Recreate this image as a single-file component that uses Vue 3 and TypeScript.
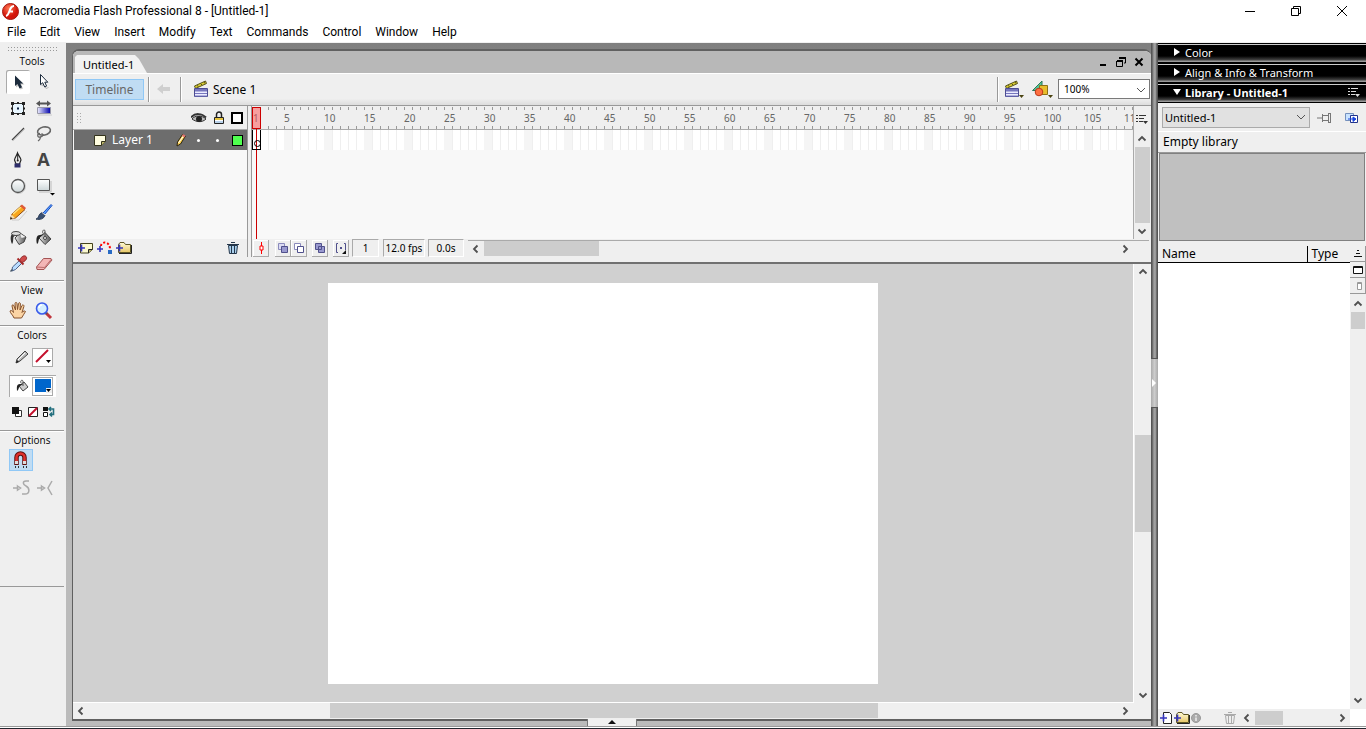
<script setup lang="ts">
import { ref } from 'vue'

interface Tool {
  id: string
  label: string
}

const menus: string[] = ['File', 'Edit', 'View', 'Insert', 'Modify', 'Text', 'Commands', 'Control', 'Window', 'Help']

const tools: Tool[] = [
  { id: 'arrow', label: 'Selection' },
  { id: 'subselect', label: 'Subselection' },
  { id: 'transform', label: 'Free transform' },
  { id: 'gradient', label: 'Gradient transform' },
  { id: 'line', label: 'Line' },
  { id: 'lasso', label: 'Lasso' },
  { id: 'pen', label: 'Pen' },
  { id: 'text', label: 'Text' },
  { id: 'oval', label: 'Oval' },
  { id: 'rect', label: 'Rectangle' },
  { id: 'pencil', label: 'Pencil' },
  { id: 'brush', label: 'Brush' },
  { id: 'ink', label: 'Ink bottle' },
  { id: 'bucket', label: 'Paint bucket' },
  { id: 'dropper', label: 'Eyedropper' },
  { id: 'eraser', label: 'Eraser' },
]
const viewTools: Tool[] = [
  { id: 'hand', label: 'Hand' },
  { id: 'zoom', label: 'Zoom' },
]
const activeTool = ref('arrow')

const frameLabels: number[] = [1, ...Array.from({ length: 22 }, (_, i) => (i + 1) * 5)]

const icons: Record<string, string> = {
  arrow: '<path d="M10 7v10.500l2.500-2 2 4 2.500-1-2-4h3.500z" fill="#999" opacity=".6"/><path d="M9 5.500v10.500l2.500-2 2 4.500 2.500-1.200-1.800-3.800h3z" fill="#1c2b3c"/>',
  subselect: '<path d="M10 7v9l2-1.500 2 4 2.500-1" fill="none" stroke="#bbb"/><path d="M8.500 4.500v10.200l2.200-2 2 4.300 1.900-.9-1.800-3.900h3z" fill="#fff" stroke="#1c2b3c"/>',
  transform: '<path d="M6.500 7.500h11v10h-11z" fill="#e8f6ff" stroke="#333"/><path d="M5 6h3v3H5zM11 6h2v2h-2zM16 6h3v3h-3zM5 11.500h2v2H5zM17 11.500h2v2h-2zM5 16h3v3H5zM11 17h2v2h-2zM16 16h3v3h-3z" fill="#222"/><path d="M11 11.500h2v2h-2z" fill="#124"/>',
  gradient: '<path d="M4 7.500 8 4.500v2h7v-2l4 3-4 3v-2H8v2z" fill="#555"/><path d="M5.500 11.500h13v6h-13z" fill="url(#g-blue)" stroke="#99a"/><path d="M6 19h14" stroke="#ccc"/>',
  line: '<path d="m7 19 12-12" stroke="#ccc"/><path d="M6 18 18 6" stroke="#444" stroke-width="1.300"/>',
  lasso: '<ellipse cx="12" cy="9" rx="6.500" ry="4" transform="rotate(-12 12 9)" fill="none" stroke="#666" stroke-width="1.600"/><path d="M8 11.500c-3 0-3 4 0 3.500s4-2.500 1.500-3.500M8 15c1 1-.5 3-2 4" fill="none" stroke="#666" stroke-width="1.300"/>',
  pen: '<path d="M11.500 5c-1 3-3 5-3 7l1.500 4h3.500l1.500-4c0-2-2.500-4-3.500-7z" fill="#eee" stroke="#222" stroke-width="1.200"/><path d="M11.700 6v7" stroke="#222"/><circle cx="11.700" cy="12.500" r="1" fill="#222"/><path d="M8.500 15.500h6v4h-6z" fill="#2d2d6a"/>',
  text: '<text x="11.500" y="18" text-anchor="middle" font-family="Open Sans, sans-serif" font-weight="700" font-size="18" fill="#444">A</text>',
  oval: '<circle cx="12.500" cy="12.500" r="7" fill="none" stroke="#ccc"/><circle cx="12" cy="12" r="6.500" fill="url(#g-face)" stroke="#555" stroke-width="1.300"/>',
  rect: '<path d="M5.500 5.500h12v11h-12z" fill="url(#g-face)" stroke="#555"/><path d="M7 18h12V7" fill="none" stroke="#bbb"/><path d="M18 19h5l-2.500 2.500z" fill="#000"/>',
  pencil: '<path d="M6 20h7l8-9" fill="none" stroke="#ccc"/><path d="m4.500 19 1.500-5 9-8 4 3.500-9.500 8.500z" fill="#f9a61c" stroke="#8f4a12"/><path d="m7 14 8-7" stroke="#ffe07a" stroke-width="1.500"/><path d="m14 6 2-1.500 4 3.500-1.500 2z" fill="#df5b39"/><path d="m4 19.500 1.500-5 3.500 3.500z" fill="#f6dba9"/><path d="m4 19.500.7-2.500 2 1.600z" fill="#222"/>',
  brush: '<path d="m11 13 8-8.500 1 1-7.500 9z" fill="#5ba2ff" stroke="#174bbf"/><path d="M4 19c3 0 2-5 6-6.500l3 2.500c-1 4-5 5-9 4z" fill="#394f72" stroke="#26364f"/><path d="m9.500 12 3.500 3" stroke="#ddd"/>',
  ink: '<path d="M6 8c-2 2-1.500 7 0 10 1.500-1 1-5 1.500-7L12 7z" fill="#333"/><path d="m9 12 5-5 6 4-2 5-5 2.500z" fill="url(#g-metal)" stroke="#444"/><path d="m14 7.500 5.500 3.500-4 1z" fill="#eee"/><ellipse cx="10" cy="7.500" rx="4.500" ry="2" fill="#ddd" stroke="#444"/>',
  bucket: '<path d="m7 12 6-5.500 6 6.500-6 5.500z" fill="url(#g-metal)" stroke="#444"/><path d="M13 12V4.500c-2-1.500-3 1-2 3" fill="none" stroke="#555"/><circle cx="13" cy="12" r="1.500" fill="#eee" stroke="#444"/><path d="M8 9c-4 0-4 5-3 9 2-1 1-4 3-7l4-3z" fill="#222"/>',
  dropper: '<path d="m6 18 .5-3 7-6.500 2.500 2.500-6.500 6.500-3.500 1.500z" fill="#b8dcff" stroke="#4d6288"/><path d="m4.500 19.500 2-2" stroke="#456" stroke-width="1.500"/><path d="m11.500 6.500 6 6" stroke="#a82727" stroke-width="2"/><path d="M14 8.500c0-3 4-6 6-4s-1 5-4 6z" fill="#ce4a4a" stroke="#8f2e2e"/>',
  eraser: '<path d="m4.500 15 7-8.500h7.500l1 1.500-8 9.500H5z" fill="#f3b6b6" stroke="#a45555"/><path d="m4.500 15 8 .500 7-8.500M12.500 15.500V17" fill="none" stroke="#bd6e6e"/>',
  hand: '<path d="M8 19c-1-3-4-5-4-7 1-1.500 3 .5 3.500 1.500L6 7c0-1.700 1.700-1.500 2 0l1.500 4-.5-6.500c.2-1.600 1.900-1.300 2 0l.5 6 1-6c.4-1.400 2-.9 1.900.5L14 11l2-4.500c.8-1.300 2.300-.4 1.900 1L16 13.500c1-1.500 3-2 3.500-1-1 2.500-3 4-4 6.500z" fill="#fbd4a4" stroke="#85502a"/>',
  zoom: '<path d="m14 14 5 5" stroke="#c0353d" stroke-width="3"/><path d="m13 13 2 2" stroke="#555" stroke-width="2"/><circle cx="10" cy="9.500" r="5.500" fill="#d5efff" stroke="#3a5bea" stroke-width="1.600"/><path d="M7 9c0-2 1.500-3 3-3" fill="none" stroke="#fff" stroke-width="1.500"/>',
}
</script>

<template>
  <div class="app">
    <svg class="defs" width="0" height="0" aria-hidden="true">
      <defs>
        <linearGradient id="g-blue"><stop offset="0" stop-color="#eef" /><stop offset="1" stop-color="#00a" /></linearGradient>
        <linearGradient id="g-face" x2="0" y2="1"><stop offset="0" stop-color="#fff" /><stop offset="1" stop-color="#cdd6d8" /></linearGradient>
        <linearGradient id="g-metal"><stop offset="0" stop-color="#eee" /><stop offset=".5" stop-color="#999" /><stop offset="1" stop-color="#555" /></linearGradient>
        <linearGradient id="g-folder" x2="0" y2="1"><stop offset="0" stop-color="#fffbd8" /><stop offset="1" stop-color="#e6c665" /></linearGradient>
        <radialGradient id="g-logo" cx=".4" cy=".3"><stop offset="0" stop-color="#ff7a55" /><stop offset="1" stop-color="#d3150a" /></radialGradient>
        <symbol id="i-up" viewBox="0 0 16 16"><path d="m4.500 9.500 3.500-3.500 3.500 3.500" fill="none" stroke="#505050" stroke-width="1.800" /></symbol>
        <symbol id="i-down" viewBox="0 0 16 16"><path d="m4.500 6.500 3.500 3.500 3.500-3.500" fill="none" stroke="#505050" stroke-width="1.800" /></symbol>
        <symbol id="i-left" viewBox="0 0 16 16"><path d="m9.500 4.500-3.500 3.500 3.500 3.500" fill="none" stroke="#505050" stroke-width="1.800" /></symbol>
        <symbol id="i-right" viewBox="0 0 16 16"><path d="m6.500 4.500 3.500 3.500-3.500 3.500" fill="none" stroke="#505050" stroke-width="1.800" /></symbol>
        <symbol id="i-chev" viewBox="0 0 16 16"><path d="m4 6 4 4 4-4" fill="none" stroke="#555" /></symbol>
        <symbol id="i-clap" viewBox="0 0 16 18"><path d="m1.500 6 11-5 1 2.500-11 5z" fill="#d8cc31" stroke="#57521a" /><path d="m4 5.500 1.500 1m2-3 1.500 1.500m2-3 1 1.500" stroke="#57521a" /><path d="M1.500 8.500h13v8h-13z" fill="#ececff" stroke="#4c4c92" /><path d="M2 9h12v2.500H2zM2 13h12v1H2z" fill="#7777be" /><path d="M2 16h12" stroke="#7777be" /></symbol>
        <symbol id="i-options" viewBox="0 0 14 12"><path d="M1 2.500h2M4 2.500h7M1 5.500h2M4 5.500h5M1 8.500h2M4 8.500h4" stroke="currentColor" /><path d="M8 8h5l-2.500 3z" fill="currentColor" /></symbol>
        <symbol id="i-trash" viewBox="0 0 14 14"><path d="M2.500 4.500h9l-1 8h-7z" fill="#a9cfec" stroke="currentColor" /><path d="M1 3.500h12M5 1.500h4M5.500 5v7M8.500 5v7" stroke="currentColor" /></symbol>
        <symbol id="i-folder" viewBox="0 0 17 14"><path d="M3.500 3.500 5 1.500h4l1.500 2h5v8h-12z" fill="url(#g-folder)" stroke="#5e5623" /><path d="M4 12.500h12.500V4" fill="none" stroke="#222" /><path d="M1 7h7M4.500 3.500v7" stroke="#3636bd" stroke-width="1.600" /></symbol>
      </defs>
    </svg>

    <header class="title-bar">
      <svg width="17" height="17" viewBox="0 0 17 17"><circle cx="8.500" cy="8.500" r="8" fill="url(#g-logo)" stroke="#a51a10" /><path d="M12 3c-3 0-3.500 2-4.500 5S6 12.500 4 13M7 8.500h4" fill="none" stroke="#fff" stroke-width="2" /></svg>
      <h1>Macromedia Flash Professional 8 - [Untitled-1]</h1>
      <div class="window-buttons">
        <button aria-label="Minimize"><svg width="12" height="12"><path d="M1 6.500h10" stroke="#000" /></svg></button>
        <button aria-label="Restore"><svg width="12" height="12"><path d="M1.500 3.500h7v7h-7zM3.500 3V1.500h7v7H9" fill="none" stroke="#000" /></svg></button>
        <button aria-label="Close"><svg width="12" height="12"><path d="m1 1 10 10M11 1 1 11" stroke="#000" /></svg></button>
      </div>
    </header>
    <nav class="menu-bar">
      <button v-for="m in menus" :key="m">{{ m }}</button>
    </nav>

    <main class="work">
      <aside class="tools">
        <div class="grip"></div>
        <h2>Tools</h2>
        <div class="tool-grid">
          <button v-for="t in tools" :key="t.id" class="tool" :class="{ on: activeTool === t.id }" :aria-label="t.label" @click="activeTool = t.id">
            <svg width="24" height="24" v-html="icons[t.id]"></svg>
          </button>
        </div>
        <section class="view">
          <h2>View</h2>
          <div class="tool-grid">
            <button v-for="t in viewTools" :key="t.id" class="tool" :class="{ on: activeTool === t.id }" :aria-label="t.label" @click="activeTool = t.id">
              <svg width="24" height="24" v-html="icons[t.id]"></svg>
            </button>
          </div>
        </section>
        <section class="colors">
          <h2>Colors</h2>
          <div class="color-row">
            <svg width="16" height="16"><path d="m2 14 1-4 8-8 3 3-8 7z" fill="#bbb" stroke="#444" /><path d="m4 11 7-7" stroke="#fff" /><path d="m2 14 1-3 2 2z" fill="#222" /></svg>
            <button class="swatch" aria-label="Stroke color"><svg width="20" height="18"><path d="M2 2h15v13H2z" fill="#fff" /><path d="M3 14 15 2" stroke="#c4102d" stroke-width="2" /><path d="M13 12h5l-2.500 3z" fill="#000" /></svg></button>
          </div>
          <div class="color-row picked">
            <svg width="16" height="16"><path d="m5 8 5-4 4 5-5 4z" fill="#ccc" stroke="#444" /><path d="M9 8V3C8 1 6 3 7 5" fill="none" stroke="#555" /><path d="M6 6c-4 0-3 4-3 7 2-1 1-3 3-5l3-2z" fill="#222" /></svg>
            <button class="swatch" aria-label="Fill color"><svg width="20" height="18"><path d="M2 2h16v13H2z" fill="#06c" /><path d="M13 11h6v5h-6z" fill="#efefef" /><path d="M13 12h5l-2.500 3z" fill="#000" /></svg></button>
          </div>
          <div class="color-actions">
            <button aria-label="Black and white"><svg width="12" height="12"><path d="M4.500 4.500h6v6h-6z" fill="#fff" stroke="#333" /><path d="M1 1h7v7H1z" fill="#111" /></svg></button>
            <button aria-label="No color"><svg width="12" height="12"><path d="M1.500 1.500h9v9h-9z" fill="#fff" stroke="#222" /><path d="m2 10 8-8" stroke="#c4102d" stroke-width="2" /></svg></button>
            <button aria-label="Swap colors"><svg width="13" height="12"><path d="M0 1h5v4H0z" fill="#111" /><path d="M.5 6.500h4v4h-4z" fill="#fff" stroke="#111" /><path d="M6 3h4.500v5.500H7M8 1 6 3l2 2M9 6.500l-2 2 2 2" fill="none" stroke="#24707f" stroke-width="1.600" /></svg></button>
          </div>
        </section>
        <section class="options">
          <h2>Options</h2>
          <button class="magnet" aria-label="Snap to objects"><svg width="24" height="20"><path d="M7.500 15V7.500a4 4 0 0 1 8 0V15" fill="none" stroke="#5d1111" stroke-width="4.500" /><path d="M7.500 12V7.500a4 4 0 0 1 8 0V12" fill="none" stroke="#e0302c" stroke-width="2.500" /><path d="M6 11h3v3H6zM14 11h3v3h-3z" fill="#ddd" /><path d="M6 17h1m2 0h1m4 0h1m2 0h1" stroke="#333" stroke-width="2" /></svg></button>
          <div class="modifiers">
            <button aria-label="Smooth"><svg width="20" height="18"><path d="M1 9h5M5.500 7l3 2-3 2zM17 2h-3c-4 0-3 4 0 5 4 2 4 8-1 8h-3" fill="none" stroke="#aaa" stroke-width="1.500" /></svg></button>
            <button aria-label="Straighten"><svg width="20" height="18"><path d="M1 9h5M5.500 7l3 2-3 2zM16 2l-4 7 4 7" fill="none" stroke="#aaa" stroke-width="1.500" /></svg></button>
          </div>
        </section>
      </aside>

      <div class="desk">
        <article class="doc">
          <div class="tab-bar">
            <button class="tab">Untitled-1</button>
            <div class="doc-buttons">
              <button aria-label="Minimize document"><svg width="10" height="10"><path d="M2 8h6" stroke="#000" stroke-width="2" /></svg></button>
              <button aria-label="Restore document"><svg width="10" height="10"><path d="M3 1h7M1 4h6" stroke="#000" stroke-width="2" /><path d="M9.500 1v5H8M.5 4v5.500h6V4" fill="none" stroke="#000" /></svg></button>
              <button aria-label="Close document"><svg width="10" height="10"><path d="m1.500 1.500 7 7m0-7-7 7" stroke="#000" stroke-width="2" /></svg></button>
            </div>
          </div>

          <div class="edit-bar">
            <button class="timeline-toggle">Timeline</button>
            <i class="rule"></i>
            <button class="back" aria-label="Back"><svg width="14" height="12"><path d="M0 6l6-5v3h7v4H6v3z" fill="#cfcfcf" /></svg></button>
            <i class="rule"></i>
            <button class="scene"><svg width="16" height="18"><use href="#i-clap" /></svg>Scene 1</button>
            <div class="edit-right">
              <i class="rule"></i>
              <button class="edit-scene" aria-label="Edit scene"><svg width="20" height="20"><g transform="translate(0 1)"><use href="#i-clap" width="16" height="18" /></g><path d="M15 16h5l-2.500 3z" fill="#4a4311" /></svg></button>
              <button aria-label="Edit symbols"><svg width="22" height="20"><path d="M1.500 11.500 11 2v9.500z" fill="#55c398" stroke="#2b7958" /><path d="M8.500 6.500h8v9h-8z" fill="#e9bd2c" stroke="#8d7218" /><circle cx="8" cy="13" r="3.800" fill="#ff7042" stroke="#ba3817" /><path d="M17 16h5l-2.500 3z" fill="#4a4311" /></svg></button>
              <label class="zoom-box"><select aria-label="Zoom"><option>100%</option></select><svg width="16" height="16"><use href="#i-chev" /></svg></label>
            </div>
          </div>

          <section class="timeline">
            <div class="layers">
              <div class="layers-head">
                <i class="dots"></i>
                <svg width="16" height="12"><path d="M1 7c3-4 10-4 14 0-4 4-10 3-14 0z" fill="#bbb" stroke="#333" /><path d="M0 5.500c4-5 11-4 15 0" fill="none" stroke="#333" stroke-width="2" /><circle cx="8" cy="7" r="3" fill="#222" /></svg>
                <svg width="12" height="14"><path d="M3.500 7V3.500a2.500 2.500 0 0 1 5 0V7" fill="none" stroke="#222" stroke-width="1.500" /><path d="M1.500 6.500h9v6h-9z" fill="#fff" stroke="#222" /><path d="M2 8h8" stroke="#e5c441" stroke-width="2" /><path d="M2 11h8" stroke="#74a5d6" /></svg>
                <svg width="12" height="12"><path d="M1 1h10v10H1z" fill="#fff" stroke="#000" stroke-width="2" /></svg>
              </div>
              <div class="layer">
                <svg width="14" height="13"><path d="M1.500 1.500h11v6l-4 4h-7z" fill="#fffde0" stroke="#34331b" /><path d="M12.500 7.500h-4v4" fill="#bbb56e" stroke="#34331b" /></svg>
                <span class="layer-name">Layer 1</span>
                <svg width="12" height="14"><path d="m2 13 .5-4 5-7.500 3 1.500-5 8z" fill="#ffd34f" stroke="#2b2412" /><path d="m3.500 10 5-7" stroke="#fff" /><path d="m8 1 2.500 1.500-1 2L7 3z" fill="#df7272" /></svg>
                <i class="dot"></i><i class="dot"></i><i class="outline-color"></i>
              </div>
              <div class="layers-foot">
                <button aria-label="Insert layer"><svg width="17" height="14"><path d="M3.500 2.500h12v6l-4 3.500h-8z" fill="#fbf9cf" stroke="#44421c" /><path d="M15.500 8.500h-4V12" fill="#b6b069" stroke="#222" /><path d="M1 7h7M4.500 3.500v7" stroke="#3636bd" stroke-width="1.600" /></svg></button>
                <button aria-label="Add motion guide"><svg width="17" height="14"><path d="M5 5c0-5 9-5 9 3" fill="none" stroke="red" stroke-width="2" stroke-dasharray="2 2" /><path d="M1 8h6M4 5v6" stroke="#3636bd" stroke-width="1.600" /><path d="M12 9h4v4h-4z" fill="#276ac5" /></svg></button>
                <button aria-label="Insert layer folder"><svg width="17" height="14"><use href="#i-folder" /></svg></button>
                <button class="trash" aria-label="Delete layer"><svg width="14" height="14"><use href="#i-trash" /></svg></button>
              </div>
            </div>

            <div class="frames">
              <div class="frames-main">
                <div class="frames-view">
                  <div class="ruler"><span v-for="n in frameLabels" :key="n">{{ n }}</span></div>
                  <div class="frame-row"><i class="keyframe"></i></div>
                  <div class="playhead"></div>
                </div>
                <div class="frames-side">
                  <button class="frame-options" aria-label="Frame view"><svg width="14" height="12"><use href="#i-options" /></svg></button>
                  <div class="vbar">
                    <button aria-label="Scroll up"><svg width="16" height="16"><use href="#i-up" /></svg></button>
                    <i class="thumb"></i>
                    <button aria-label="Scroll down"><svg width="16" height="16"><use href="#i-down" /></svg></button>
                  </div>
                </div>
              </div>
              <div class="frames-foot">
                <button class="mini" aria-label="Center frame"><svg width="14" height="14"><path d="M7.500 1v12" stroke="red" /><path d="M6 5h3v4H6z" fill="#fff" stroke="red" /></svg></button>
                <div class="pair">
                  <button class="mini" aria-label="Onion skin"><svg width="14" height="14"><path d="M2.500 2.500h6v6h-6z" fill="#dcdcf3" stroke="#8a8abc" /><path d="M5.500 5.500h6v6h-6z" fill="#9a9ad0" stroke="#50508c" /></svg></button>
                  <button class="mini" aria-label="Onion skin outlines"><svg width="14" height="14"><path d="M2.500 2.500h6v6h-6z" fill="#fff" stroke="#8a8abc" /><path d="M5.500 5.500h6v6h-6z" fill="#fff" stroke="#50508c" /></svg></button>
                </div>
                <button class="mini" aria-label="Edit multiple frames"><svg width="14" height="14"><path d="M2.500 2.500h6v6h-6zM5.500 5.500h6v6h-6z" fill="#9a9ad0" stroke="#50508c" /></svg></button>
                <button class="mini" aria-label="Modify onion markers"><svg width="14" height="14"><path d="M4 2.500H2.500v9H4M10 2.500h1.500V9" fill="none" stroke="#50508c" /><path d="M6 6h2v2H6z" fill="#50508c" /><path d="M12 9v4H8z" fill="#111" /></svg></button>
                <output class="current">1</output>
                <output class="fps">12.0 fps</output>
                <output class="time">0.0s</output>
                <div class="hbar">
                  <button aria-label="Scroll left"><svg width="16" height="16"><use href="#i-left" /></svg></button>
                  <i class="thumb"></i>
                  <button aria-label="Scroll right"><svg width="16" height="16"><use href="#i-right" /></svg></button>
                </div>
              </div>
            </div>
          </section>

          <section class="stage-area">
            <div class="pasteboard"><div class="stage"></div></div>
            <div class="vbar">
              <button aria-label="Scroll up"><svg width="16" height="16"><use href="#i-up" /></svg></button>
              <div class="track"><i class="gap"></i><i class="thumb"></i><i class="rest"></i></div>
              <button aria-label="Scroll down"><svg width="16" height="16"><use href="#i-down" /></svg></button>
            </div>
          </section>
          <div class="hbar stage-h">
            <button aria-label="Scroll left"><svg width="16" height="16"><use href="#i-left" /></svg></button>
            <div class="track"><i class="gap"></i><i class="thumb"></i><i class="rest"></i></div>
            <button aria-label="Scroll right"><svg width="16" height="16"><use href="#i-right" /></svg></button>
          </div>
        </article>
        <button class="bottom-handle" aria-label="Expand bottom panels"><svg width="8" height="5"><path d="m4 0 4 4H0z" fill="#111" /></svg></button>
      </div>

      <div class="splitter"><button aria-label="Collapse panels"><svg width="5" height="8"><path d="m0 0 4 4-4 4z" fill="#fff" /></svg></button></div>

      <aside class="panels">
        <button class="panel-title"><svg width="8" height="10"><path d="m1 1 6 4-6 4z" fill="#fff" /></svg>Color</button>
        <button class="panel-title"><svg width="8" height="10"><path d="m1 1 6 4-6 4z" fill="#fff" /></svg>Align &amp; Info &amp; Transform</button>
        <button class="panel-title open"><svg width="8" height="10"><path d="M0 2h8L4 8z" fill="#fff" /></svg>Library - Untitled-1<svg class="more" width="14" height="12"><use href="#i-options" /></svg></button>
        <div class="library-doc">
          <label><select aria-label="Library document"><option>Untitled-1</option></select><svg width="16" height="16"><use href="#i-chev" /></svg></label>
          <button aria-label="Pin library"><svg width="15" height="12"><path d="M0 6h5M5.500 2v8M5.500 3.500h6v5h-6zM11.500 1v10M13.500 1v10M11 1.500h3M11 10.500h3" fill="none" stroke="#777" /></svg></button>
          <button aria-label="New library panel"><svg width="15" height="12"><path d="M1.500 1.500h8v7h-8z" fill="#c9e3ff" stroke="#7590bd" /><path d="M6.500 3.500h7v7h-7z" fill="#fff" stroke="#22348c" /><path d="M4 7h5M9 5l3 2-3 2.500z" fill="#1844de" stroke="#1844de" /></svg></button>
        </div>
        <p class="library-state">Empty library</p>
        <div class="preview"></div>
        <div class="library-body">
          <div class="list">
            <table><thead><tr><th>Name</th><th class="type">Type</th></tr></thead></table>
          </div>
          <div class="list-side">
            <button class="cap" aria-label="Toggle sorting order"><svg width="10" height="10"><path d="M4 1.500h2M3 4.500h4M1 7.500h8" stroke="#111" /></svg></button>
            <button class="cap" aria-label="Wide library view"><svg width="10" height="10"><path d="M.5 1.500h9v7h-9z" fill="#fff" stroke="#111" /><path d="M1 2.500h8" stroke="#111" /></svg></button>
            <button class="cap" aria-label="Narrow library view"><svg width="10" height="10"><path d="M4.500 1.500h4v7h-4z" fill="#fff" stroke="#999" /><path d="M4 2.500h5" stroke="#999" /></svg></button>
            <div class="vbar">
              <button aria-label="Scroll up"><svg width="16" height="16"><use href="#i-up" /></svg></button>
              <i class="thumb"></i>
              <i class="rest"></i>
              <button aria-label="Scroll down"><svg width="16" height="16"><use href="#i-down" /></svg></button>
            </div>
          </div>
        </div>
        <div class="library-foot">
          <button aria-label="New symbol"><svg width="14" height="14"><path d="M4.500 1.500h6l2 2v9h-8z" fill="#fff" stroke="#222" /><path d="M1 7h7M4.500 3.500v7" stroke="#3636bd" stroke-width="1.600" /></svg></button>
          <button aria-label="New folder"><svg width="17" height="14"><use href="#i-folder" /></svg></button>
          <button aria-label="Properties"><svg width="12" height="12"><circle cx="6" cy="6" r="4.500" fill="#aaa" stroke="#999" /><path d="M6 3v1.500M6 5.500V9" stroke="#eee" stroke-width="1.500" /></svg></button>
          <button class="erase" aria-label="Delete"><svg width="14" height="14"><path d="M2.500 4.500h9l-1 8h-7zM1 3.500h12M5 1.500h4M5.500 5v7M8.500 5v7" fill="none" stroke="#aaa" /></svg></button>
          <div class="hbar">
            <button aria-label="Scroll left"><svg width="16" height="16"><use href="#i-left" /></svg></button>
            <i class="thumb"></i>
            <i class="rest"></i>
            <button aria-label="Scroll right"><svg width="16" height="16"><use href="#i-right" /></svg></button>
          </div>
        </div>
      </aside>
    </main>
    <div class="screen-edge"></div>
  </div>
</template>

<style>
html, body { height: 100%; overflow: hidden; }
</style>

<style scoped>
* { box-sizing: border-box; }
.app { display: flex; flex-direction: column; height: 100vh; background: #fff; color: #000; font-family: "Noto Sans", sans-serif; font-size: 12px; }
.defs { position: absolute; }
button { display: flex; align-items: center; justify-content: center; flex: none; margin: 0; padding: 0; border: 0; background: none; color: inherit; font: inherit; }
svg { display: block; flex: none; }
h1, h2, p { margin: 0; font-weight: 400; }

.title-bar { display: flex; align-items: center; height: 22px; padding-left: 2px; }
h1 { margin-left: 4px; font-family: Roboto, sans-serif; font-size: 12px; line-height: 20px; }
.window-buttons { display: flex; margin-left: auto; height: 20px; }
.window-buttons button { width: 46px; }
.window-buttons button:nth-child(2) { width: 45px; }
.window-buttons button:last-child { width: 48px; }
.menu-bar { display: flex; gap: 14px; height: 21px; padding: 0 7px; font-family: Roboto, sans-serif; line-height: 20px; border-bottom: 1px solid #f0f0f0; }

.work { display: flex; flex: 1; min-height: 0; }
.tools { display: flex; flex-direction: column; width: 66px; padding-right: 2px; background: #efefef; }
.grip { height: 6px; margin: 3px 6px 0 7px; background: radial-gradient(circle, #999 1px, transparent 1px) 0 0 / 3px 3px; }
h2 { height: 18px; font-family: "Open Sans", sans-serif; font-size: 10px; line-height: 18px; text-align: center; }
.tool-grid { display: grid; grid-template-columns: 24px 24px; gap: 2px; padding-left: 6px; }
.tool { width: 24px; height: 24px; border-radius: 2px; }
.tool.on { background: #fff; box-shadow: inset 1px 1px #aaa; }
.tools section { border-top: 1px solid #999; box-shadow: inset 0 1px #fff; padding-top: 1px; }
.tools .view { margin-top: 4px; height: 45px; }
.view h2, .colors h2, .options h2 { height: 17px; line-height: 17px; }
.colors { height: 105px; }
.color-row { display: flex; align-items: center; gap: 2px; height: 22px; width: 47px; margin: 2px 0 0 9px; padding-left: 5px; }
.color-row.picked { margin-top: 7px; background: #fff; box-shadow: inset 1px 1px #aaa; }
.swatch { width: 21px; height: 19px; border: 1px solid #aaa; background: #fff; }
.color-actions { display: flex; gap: 4px; padding: 9px 0 0 11px; }
.options { height: 156px; }
.magnet { width: 24px; height: 22px; margin-left: 9px; background: #c0dcf3; border: 1px solid #90c8f6; }
.modifiers { display: flex; gap: 4px; padding: 8px 0 0 12px; }
.tools::after { content: ""; border-top: 1px solid #999; }

.desk { display: flex; flex-direction: column; flex: 1; min-width: 0; padding: 6px 0 0 6px; background: linear-gradient(#7f7f7f, #858585 10%, #bbb 75%); }
.doc { display: flex; flex-direction: column; flex: 1; min-height: 0; border: solid #606060; border-width: 2px 0 2px 1px; border-radius: 7px 7px 0 0; background: #efefef; overflow: hidden; }
.tab-bar { display: flex; align-items: flex-end; height: 22px; background: #b8b8b8; }
.tab { width: 72px; height: 18px; margin-left: 2px; padding-left: 8px; justify-content: flex-start; background: #f2f2f2; clip-path: polygon(0 2px, 2px 0, 60px 0, 64px 4px, 72px 100%, 0 100%); font-size: 11px; }
.doc-buttons { display: flex; gap: 8px; align-self: center; margin: 0 7px 0 auto; }
.edit-bar { display: flex; align-items: center; height: 33px; padding-left: 2px; background: linear-gradient(#fff 0 1px, #efefef 1px 80%, #ddd); border-bottom: 1px solid #999; }
.timeline-toggle { width: 69px; height: 21px; margin-right: 4px; border: 1px solid #90c8f6; background: #c0dcf3; color: #666; }
.rule { width: 2px; height: 25px; border-left: 1px solid #999; border-right: 1px solid #fff; }
.back { margin: 0 10px 0 7px; width: 13px; }
.scene { margin-left: 11px; gap: 4px; font-size: 12px; }
.edit-right { display: flex; align-items: center; margin-left: auto; gap: 5px; padding-right: 1px; }
.edit-scene { margin-right: 2px; }
.edit-right svg { overflow: visible; }
.zoom-box { position: relative; display: flex; }
.zoom-box svg { position: absolute; right: 1px; top: 3px; }
select { appearance: none; margin: 0; color: #000; border-radius: 0; outline: 0; font-family: "Noto Sans", sans-serif; }
.zoom-box select { width: 92px; height: 20px; padding: 0 5px; border: 1px solid #7a7a7a; background: #fff; font-size: 10px; }

.timeline { display: flex; height: 158px; padding-bottom: 5px; border-bottom: 2px solid #707070; }
.layers { display: flex; flex-direction: column; width: 175px; border-right: 1px solid #999; background: #f8f8f8; }
.layers-head { display: flex; align-items: center; height: 24px; padding-right: 4px; gap: 6px; background: #efefef; border-bottom: 1px solid #aaa; }
.dots { width: 6px; height: 12px; margin: 0 auto 0 3px; background: radial-gradient(circle, #aaa 1px, transparent 1px) 0 0 / 3px 3px; }
.layer { display: flex; align-items: center; height: 20px; margin-left: 1px; padding: 0 4px 0 19px; background: #6d6d6d; color: #fff; }
.layer-name { margin: 0 auto 0 5px; line-height: 20px; }
.dot { width: 3px; height: 3px; border-radius: 50%; background: #fff; margin-left: 10px; }
.dot + .dot { margin-left: 16px; }
.outline-color { width: 11px; height: 11px; margin-left: 13px; border: 1px solid #000; background: #4fff4f; }
.layers-foot { display: flex; align-items: center; gap: 2px; height: 18px; margin-top: auto; padding: 0 7px 0 4px; background: #efefef; color: #24364a; }
.trash { margin-left: auto; }
.frames { display: flex; flex-direction: column; flex: 1; min-width: 0; margin-left: 3px; border-left: 1px solid #999; }
.frames-main { display: flex; flex: 1; min-height: 0; }
.frames-view { position: relative; flex: 1; min-width: 0; overflow: hidden; background: #f8f8f8; }
.ruler { display: flex; height: 24px; border-bottom: 1px solid #aaa; background: repeating-linear-gradient(90deg, #999 0 1px, transparent 1px 8px) 0 1px / 100% 3px no-repeat, repeating-linear-gradient(90deg, #999 0 1px, transparent 1px 8px) 0 20px / 100% 3px no-repeat, #efefef; color: #666; font-size: 10px; line-height: 24px; }
.ruler span { flex: none; width: 40px; }
.ruler span:first-child { width: 32px; padding-left: 1px; }
.frame-row { height: 20px; background: repeating-linear-gradient(90deg, transparent 0 32px, #f5f5f5 32px 40px), repeating-linear-gradient(90deg, #efefef 0 1px, #fff 1px 8px); }
.keyframe { display: block; position: relative; z-index: 1; width: 9px; height: 20px; border: 1px solid #000; border-top: 0; }
.keyframe::after { content: ""; position: absolute; left: 1px; bottom: 2px; width: 5px; height: 5px; border: 1px solid #000; border-radius: 50%; }
.playhead { position: absolute; left: 0; top: 1px; width: 9px; height: 22px; border: 1px solid #c00; background: rgba(255, 80, 80, .5); }
.playhead::after { content: ""; position: absolute; left: 3px; top: 21px; height: 120px; border-left: 1px solid #c00; }
.frames-side { display: flex; flex-direction: column; align-items: center; width: 18px; background: #efefef; border-left: 1px solid #aaa; padding-right: 1px; }
.frame-options { height: 25px; color: #333; }
.vbar { display: flex; flex-direction: column; align-items: center; flex: 1; min-height: 0; background: #efefef; }
.vbar button { width: 16px; height: 16px; }
.thumb { display: block; background: #cdcdcd; }
.frames-side .thumb { width: 15px; flex: 1; }
.frames-foot { display: flex; align-items: center; height: 18px; padding: 0 2px 0 1px; background: #efefef; gap: 5px; }
.mini { width: 16px; height: 17px; border-right: 1px solid #aaa; border-bottom: 1px solid #aaa; box-shadow: inset 1px 1px #fff; }
.pair { display: flex; margin-left: 1px; }
output { height: 18px; border: 1px solid #aaa; border-right-color: #fff; border-bottom-color: #fff; font-size: 10px; line-height: 17px; text-align: center; white-space: nowrap; }
.current { width: 27px; margin-left: -2px; }
.fps { width: 42px; margin-left: -1px; }
.time { width: 36px; margin-left: -2px; }
.hbar { display: flex; align-items: center; flex: 1; min-width: 0; background: #efefef; }
.hbar button { width: 16px; height: 16px; }
.frames-foot .hbar { height: 17px; margin-left: -1px; border-top: 1px solid #aaa; padding-right: 16px; }
.frames-foot .thumb { width: 115px; height: 15px; margin-right: auto; }

.stage-area { display: flex; flex: 1; min-height: 0; }
.pasteboard { display: flex; flex: 1; padding: 19px 255px 18px; background: #d0d0d0; border-right: 1px solid #fff; border-bottom: 1px solid #fff; }
.stage { flex: 1; background: #fff; }
.stage-area .vbar { flex: none; width: 17px; }
.track { display: flex; flex: 1; align-self: stretch; }
.vbar .track { flex-direction: column; align-items: center; }
.gap { flex: 154; }
.track .thumb { flex: 96; }
.rest { flex: 154; }
.vbar .track .thumb { width: 16px; }
.stage-h { flex: none; height: 16px; padding-right: 18px; }
.stage-h .gap { flex: 241; }
.stage-h .track .thumb { flex: 548; height: 15px; }
.stage-h .rest { flex: 239; }
.bottom-handle { position: relative; width: 50px; height: 7px; margin: -2px 0 0 515px; border: solid #777; border-width: 0 1px; background: #f0f0f0; }
.splitter { display: flex; align-items: center; width: 7px; background: linear-gradient(90deg, #555 0 1px, #858585 2px, #aaa 4px, #888 5px, #555 6px); }
.splitter button { width: 7px; height: 50px; margin-top: -4px; border: solid #555; border-width: 1px 0; background: linear-gradient(90deg, #aaa, #ccc, #aaa); }

.panels { display: flex; flex-direction: column; width: 208px; background: #efefef; }
.panel-title { justify-content: flex-start; height: 20px; padding: 0 5px 2px 15px; gap: 4px; background: linear-gradient(#000 0 1px, #ccc 1px 2px, #000 2px 13px, #444 17px, #999 18px 19px, #000 19px); color: #fff; font-size: 11px; }
.panel-title.open { font-weight: 700; }
.more { margin-left: auto; color: #ddd; }
.library-doc { display: flex; align-items: center; gap: 12px; height: 29px; padding: 1px 7px 0 4px; border-bottom: 1px solid #fff; }
.library-doc label { position: relative; display: flex; flex: 1; margin-right: -5px; }
.library-doc label svg { position: absolute; right: 1px; top: 2px; }
.library-doc select { width: 100%; height: 21px; padding: 0 2px; border: 1px solid #aaa; background: #e1e1e1; font-size: 11px; }
.library-state { height: 21px; padding-left: 5px; border-bottom: 1px solid #999; line-height: 20px; }
.preview { height: 88px; margin: 0 1px 5px; border: 1px solid #808080; background: #c0c0c0; }
.library-body { display: flex; flex: 1; min-height: 0; background: #fff; }
.list { flex: 1; }
table { width: 100%; border-collapse: collapse; background: #efefef; border-bottom: 1px solid #000; }
th { height: 16px; padding: 0 4px; text-align: left; font-weight: 400; line-height: 16px; }
.type { width: 43px; border-left: 1px solid #000; }
.list-side { display: flex; flex-direction: column; width: 16px; background: #efefef; }
.cap { width: 16px; height: 16px; border-right: 1px solid #999; border-bottom: 1px solid #999; }
.list-side .vbar { padding: 2px 0 1px; }
.list-side .thumb { width: 14px; height: 17px; }
.library-foot { display: flex; align-items: center; height: 17px; padding: 0 16px 0 1px; background: #efefef; box-shadow: inset -16px 0 #fff; }
.erase { margin-left: 21px; }
.library-foot .thumb { width: 28px; height: 14px; }
.library-foot .hbar { margin-left: 2px; }
.screen-edge { height: 3px; border-top: 1px solid #999; background: linear-gradient(#fff 0 1px, #20252d 1px); }
</style>
